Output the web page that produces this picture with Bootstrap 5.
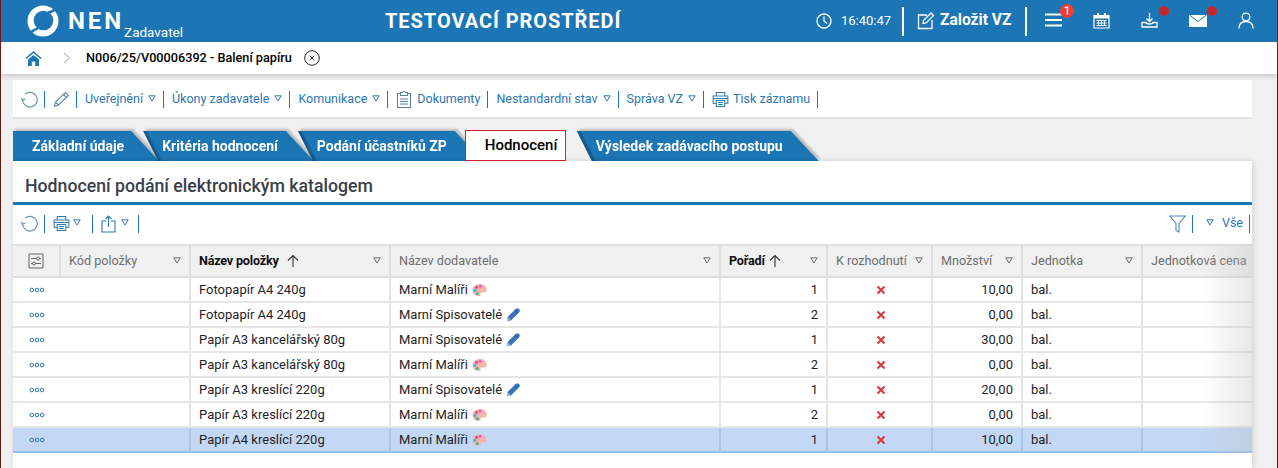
<!DOCTYPE html>
<html lang="cs">
<head>
    <meta charset="UTF-8">
    <title>NEN Zadavatel</title>
    <link href="https://cdn.jsdelivr.net/npm/bootstrap@5.3.0/dist/css/bootstrap.min.css" rel="stylesheet">
    <style>
        html, body { height: 468px; overflow: hidden; }
        body { font-family: Roboto, "Liberation Sans", sans-serif; font-size: 13px; color: #1f2328; background: #f0f0f0; }
        svg { display: block; flex: none; }
        .app-frame { height: 468px; overflow: hidden; border-left: 1px solid #6b1c12; border-right: 1px solid #6b1c12; }

        .top-bar { height: 42px; background: #1c75b5; color: #fff; }
        .logo-box { width: 384px; padding-left: 26px; }
        .logo-nen { font-size: 24px; font-weight: 700; letter-spacing: 2.9px; margin-left: 9px; line-height: 1; }
        .logo-sub { font-size: 13.5px; margin-top: 23px; line-height: 1; }
        .env-title { font-size: 20px; font-weight: 700; letter-spacing: .95px; width: 431px; }
        .time-text { font-size: 13px; margin-left: 9px; width: 61px; }
        .bar-sep { width: 2px; height: 29px; background: #fff; }
        .new-vz { font-size: 15.6px; font-weight: 700; margin-left: 5px; width: 85px; }
        .icon-strip { margin-left: 18px; margin-top: -2px; }
        .top-icon { position: relative; }
        .count-dot { position: absolute; top: -9px; left: 15px; width: 14px; height: 14px; border-radius: 50%; background: #ef3e36; font-size: 12px; line-height: 14px; text-align: center; color: #fff; }
        .alert-dot { position: absolute; top: -6px; left: 18px; width: 10px; height: 10px; border-radius: 50%; background: #c6282b; }

        .crumb-bar { height: 32px; background: #fff; box-shadow: 0 2px 5px rgba(0,0,0,.18); padding-left: 24px; position: relative; }
        .crumb-text { font-size: 12.7px; font-weight: 500; color: #000; margin: 0 12px 0 15px; }

        .action-bar { margin: 6px 25px 0 12px; height: 39px; background: #fff; border-bottom: 2px solid #e2e2e2; padding: 11px 0 0 8px; }
        .tool-item { height: 17px; padding: 0 7px 0 8px; border-right: 1px solid #1c75b5; color: #2a77b4; font-size: 12.5px; line-height: 16px; white-space: nowrap; }
        .tool-item:first-child { padding: 0 6px 0 0; }
        .action-bar .tool-item:nth-child(2) { padding-right: 6px; }
        .tri { margin-left: 5px; }

        .tab-row { margin: 11px 0 0 12px; height: 31px; }
        .tab-wrap { filter: drop-shadow(2px -2px 1px rgba(0,0,0,.22)); margin-left: -16px; margin-top: 1px; }
        .tab-wrap:first-child { margin-left: 0; }
        .tab-shape { height: 30px; padding: 0 36px 0 19px; line-height: 30px; background: linear-gradient(63deg, #14578a 0 15px, #1c75b5 18px); color: #fff; font-weight: 700; font-size: 14px; white-space: nowrap;
            clip-path: polygon(0 0, calc(100% - 28px) 0, 100% 100%, 15px 100%); }
        .tab-wrap:first-child .tab-shape { padding-right: 35px; background: #1c75b5; clip-path: polygon(0 0, calc(100% - 28px) 0, 100% 100%, 0 100%); }
        .tab-current { height: 31px; width: 101px; margin: 0 11px 0 -18px; padding-left: 19px; line-height: 28px; background: #fff; border: 1px solid #d3202a; color: #000; font-size: 15px; font-weight: 500; position: relative; z-index: 1; }

        .main-panel { margin: 0 25px 0 12px; height: 307px; background: #fff; box-shadow: 1px 0 5px rgba(0,0,0,.14); position: relative; overflow: hidden; }
        .panel-title { height: 44px; padding: 15px 0 0 12px; border-bottom: 3px solid #1c75b5; font-size: 17.7px; font-weight: 500; color: #3a3f4b; line-height: 20px; }
        .panel-tools { height: 39px; padding: 10px 0 0 8px; }
        .panel-tools .tool-item { height: 18px; padding-right: 11px; }
        .panel-tools .tool-item:first-child { padding-right: 6px; }
        .panel-tools .tool-item:nth-child(3) { padding-right: 9px; }
        .filter-side { color: #2a77b4; margin-right: 2px; }

        .grid-table { width: 1349px; table-layout: fixed; border-collapse: separate; border-spacing: 0; margin: 0; font-size: 13px; }
        .grid-table th { height: 34px; padding: 0 8px; background: #f0f0f0; font-size: 12.6px; font-weight: 400; color: #6e6e6e; vertical-align: middle; border-top: 2px solid #e0e0e0; border-bottom: 2px solid #dedede; border-right: 2px solid #dedede; white-space: nowrap; }
        .grid-table td { height: 25px; padding: 1px 8px 0; color: #1f2328; border-bottom: 2px solid #e6e6e6; border-right: 2px solid #e6e6e6; white-space: nowrap; vertical-align: middle; }
        .grid-table td:nth-child(6) { padding-left: 10px; }
        .grid-table th.is-sorted { color: #111; font-weight: 700; letter-spacing: -.2px; }
        .grid-table td.no-line { border-right: 0; }
        .grid-table tr.row-picked td { background: #c2d8f4; border-bottom-color: #93c0f0; border-right-color: #a9c6e6; }
        .th-inner { display: flex; align-items: center; justify-content: space-between; }
        .dots-cell { padding-left: 16px !important; }
        .supplier-mark { display: inline-block; vertical-align: -3px; margin-left: 4px; }
        .right-fade { position: absolute; top: 83px; right: 0; width: 50px; height: 209px; background: linear-gradient(to right, rgba(190,190,190,0), rgba(190,190,190,.35)); pointer-events: none; }
    </style>
</head>
<body>
<svg width="0" height="0" class="position-absolute">
    <symbol id="ic-tri" viewBox="0 0 8 7"><path d="M.8.8h6.400L4 6z" fill="none" stroke="currentColor" stroke-width="1"/></symbol>
    <symbol id="ic-refresh" viewBox="0 0 18 18"><path d="M4.200 3.400A7.800 7.800 0 1 1 1.600 9.600" fill="none" stroke="#5b87ad" stroke-width="1.100"/><path d="M.4 7.200l1.200 2.600 3-1.400" fill="none" stroke="#5b87ad" stroke-width="1.100"/></symbol>
    <symbol id="ic-print" viewBox="0 0 18 18"><path d="M4.500 5V1.500h9V5M4.500 13H1.200V5.200h15.600V13h-3.300" fill="none" stroke="currentColor" stroke-width="1.100"/><path d="M4.500 10h9v6.500h-9zM6.500 12.200h5M6.500 14.200h5M1.200 8h15.600" fill="none" stroke="currentColor" stroke-width="1.100"/></symbol>
    <symbol id="ic-dots" viewBox="0 0 16 6"><g fill="none" stroke="#2a77b4" stroke-width="1"><circle cx="2.800" cy="3" r="1.800"/><circle cx="8" cy="3" r="1.800"/><circle cx="13.200" cy="3" r="1.800"/></g></symbol>
    <symbol id="ic-x" viewBox="0 0 10 10"><path d="M1.500 1.500l7 7M8.500 1.500l-7 7" stroke="#d8383c" stroke-width="2" fill="none"/></symbol>
    <symbol id="ic-up" viewBox="0 0 12 14"><path d="M6 13V1.500M1 6.500 6 1.500l5 5" fill="none" stroke="#333" stroke-width="1.100"/></symbol>
    <symbol id="ic-palette" viewBox="0 0 15 14"><path d="M8 1C4 1 .5 3.400.5 7.200c0 3.600 3 5.800 6.700 5.800 1.500 0 1.800-1 1.300-1.900-.5-1 .2-1.700 1.300-1.700h2.400c1.500 0 2.500-.8 2.500-2.200C14.700 3.500 12 1 8 1z" fill="#f5b3aa"/><circle cx="4.500" cy="4.200" r="1.500" fill="#ee3f9d"/><circle cx="8.200" cy="3.300" r="1.300" fill="#d94fe0"/><circle cx="2.900" cy="7.500" r="1.400" fill="#2fb2e6"/><circle cx="5.200" cy="10.500" r="1.500" fill="#3dbb86"/></symbol>
    <symbol id="ic-pen" viewBox="0 0 14 14"><path d="M.8 13.200l.8-4.200L9.600 1a2 2 0 0 1 3.400 3.400L5 12.400z" fill="#3b76bd"/><path d="M.8 13.200l.8-4.200 3.400 3.400z" fill="#a9b7c9"/><path d="M8.800 2l3.200 3.200" stroke="#20518e" stroke-width=".8"/></symbol>
</svg>

<div class="app-frame">
    <header class="top-bar d-flex align-items-center">
        <div class="logo-box d-flex align-items-center">
            <svg width="32" height="32" viewBox="0 0 32 32"><circle cx="16" cy="16" r="15.500" fill="#fff"/><circle cx="16.500" cy="15.500" r="9.800" fill="#1c75b5"/><path d="M21 7.500C25 7 29 4.500 31.500 1M11 23.500C7.500 24.500 3.500 27 1 31" fill="none" stroke="#1c75b5" stroke-width="2.600"/></svg>
            <span class="logo-nen">NEN</span>
            <span class="logo-sub">Zadavatel</span>
        </div>
        <div class="env-title">TESTOVACÍ PROSTŘEDÍ</div>
        <svg width="16" height="16" viewBox="0 0 16 16"><circle cx="8" cy="8" r="7" fill="none" stroke="#fff" stroke-width="1.300"/><path d="M8 3.500V8l3 2.500" fill="none" stroke="#fff" stroke-width="1.300"/></svg>
        <span class="time-text">16:40:47</span>
        <span class="bar-sep"></span>
        <svg width="18" height="18" viewBox="0 0 18 18" style="margin-left:13px"><path d="M10 3H1.500v13.500H15V8" fill="none" stroke="#fff" stroke-width="1.300"/><path d="M6.500 8.500 14 1l2.500 2.500L9 11l-3 .5z" fill="none" stroke="#fff" stroke-width="1.300"/></svg>
        <span class="new-vz">Založit VZ</span>
        <span class="bar-sep"></span>
        <div class="icon-strip d-flex align-items-center">
            <div class="top-icon"><svg width="17" height="14" viewBox="0 0 17 14"><path d="M0 1.500h17M0 7h17M0 12.500h17" stroke="#fff" stroke-width="2"/></svg><span class="count-dot">1</span></div>
            <div class="top-icon" style="margin-left:31px"><svg width="17" height="17" viewBox="0 0 17 17"><path d="M1 3.500h15V16H1z" fill="none" stroke="#fff" stroke-width="1.200"/><path d="M1 3h15v3.500H1zM4 1h2v3H4zM11 1h2v3h-2z" fill="#fff"/><path d="M3.500 8.500h10M3.500 11h10M3.500 13.500h10M5.500 8v6M8.500 8v6M11.500 8v6" stroke="#fff" stroke-width="1"/></svg></div>
            <div class="top-icon" style="margin-left:31px"><svg width="17" height="17" viewBox="0 0 17 17"><path d="M8.500 1v8M5.500 6.500l3 3 3-3" fill="none" stroke="#fff" stroke-width="1.300"/><path d="M1 10.500v4.500h15v-4.500h-4c-.5 2-6.500 2-7 0z" fill="none" stroke="#fff" stroke-width="1.300"/></svg><span class="alert-dot"></span></div>
            <div class="top-icon" style="margin-left:31px"><svg width="18" height="13" viewBox="0 0 18 13"><path d="M0 1h18v12H0z" fill="#fff"/><path d="M.5 1 9 7.500 17.500 1" fill="none" stroke="#1c75b5" stroke-width="1"/></svg><span class="alert-dot" style="top:-8px"></span></div>
            <div class="top-icon" style="margin-left:31px"><svg width="16" height="17" viewBox="0 0 16 17"><circle cx="8" cy="5" r="3.800" fill="none" stroke="#fff" stroke-width="1.300"/><path d="M1 16.500c0-4.500 2.500-7 7-7s7 2.500 7 7" fill="none" stroke="#fff" stroke-width="1.300"/></svg></div>
        </div>
    </header>

    <nav class="crumb-bar d-flex align-items-center">
        <svg width="17" height="16" viewBox="0 0 17 16"><path d="M8.500 1 .5 8l1 1 7-6 7 6 1-1z" fill="#1c75b5"/><path d="M3 9.500 8.500 5 14 9.500V16h-3.800v-4.500H6.800V16H3z" fill="#1c75b5"/></svg>
        <svg width="8" height="12" viewBox="0 0 8 12" style="margin-left:21px"><path d="M1 1l5.500 5L1 11" fill="none" stroke="#9a9a9a" stroke-width="1"/></svg>
        <span class="crumb-text">N006/25/V00006392 - Balení papíru</span>
        <svg width="16" height="16" viewBox="0 0 16 16"><circle cx="8" cy="8" r="7.300" fill="none" stroke="#222" stroke-width="1"/><path d="M5.800 5.800l4.400 4.400M10.200 5.800l-4.400 4.400" stroke="#222" stroke-width="1"/></svg>
    </nav>

    <div class="action-bar d-flex">
        <div class="tool-item"><svg width="17" height="17"><use href="#ic-refresh"/></svg></div>
        <div class="tool-item"><svg width="17" height="17" viewBox="0 0 17 17"><path d="M1.500 15.500 2.500 11 12.500 1.500l3 3L5.500 14zM2.500 11l3 3M10.500 3.500l3 3" fill="none" stroke="#5b87ad" stroke-width="1.100"/></svg></div>
        <div class="tool-item d-flex">Uveřejnění<svg class="tri mt-1" width="8" height="7"><use href="#ic-tri"/></svg></div>
        <div class="tool-item d-flex">Úkony zadavatele<svg class="tri mt-1" width="8" height="7"><use href="#ic-tri"/></svg></div>
        <div class="tool-item d-flex">Komunikace<svg class="tri mt-1" width="8" height="7"><use href="#ic-tri"/></svg></div>
        <div class="tool-item d-flex"><svg width="16" height="17" viewBox="0 0 16 17" style="margin-right:5px"><path d="M4.500 2.500H1.500v14h13v-14h-3" fill="none" stroke="#5b7f9f" stroke-width="1.100"/><path d="M4.500 1.500h2c.3-1.300 2.700-1.300 3 0h2v3h-7zM4 8h8M4 10.500h8M4 13h8" fill="none" stroke="#5b7f9f" stroke-width="1.100"/></svg>Dokumenty</div>
        <div class="tool-item d-flex">Nestandardní stav<svg class="tri mt-1" width="8" height="7"><use href="#ic-tri"/></svg></div>
        <div class="tool-item d-flex">Správa VZ<svg class="tri mt-1" width="8" height="7"><use href="#ic-tri"/></svg></div>
        <div class="tool-item d-flex"><svg width="17" height="17" style="margin-right:4px"><use href="#ic-print"/></svg>Tisk záznamu</div>
    </div>

    <div class="tab-row d-flex">
        <div class="tab-wrap"><div class="tab-shape">Základní údaje</div></div>
        <div class="tab-wrap"><div class="tab-shape">Kritéria hodnocení</div></div>
        <div class="tab-wrap"><div class="tab-shape">Podání účastníků ZP</div></div>
        <div class="tab-current">Hodnocení</div>
        <div class="tab-wrap" style="margin-left:0"><div class="tab-shape">Výsledek zadávacího postupu</div></div>
    </div>

    <section class="main-panel">
        <h1 class="panel-title m-0">Hodnocení podání elektronickým katalogem</h1>
        <div class="panel-tools d-flex">
            <div class="tool-item"><svg width="17" height="17"><use href="#ic-refresh"/></svg></div>
            <div class="tool-item d-flex"><svg width="17" height="17"><use href="#ic-print"/></svg><svg class="mt-1" style="margin-left:3px" width="8" height="7"><use href="#ic-tri"/></svg></div>
            <div class="tool-item d-flex"><svg width="15" height="18" viewBox="0 0 15 18"><path d="M5 6H1v11h13V6h-4M7.500 12V1M4.500 4l3-3 3 3" fill="none" stroke="#2a77b4" stroke-width="1.100"/></svg><svg class="tri mt-1" width="8" height="7"><use href="#ic-tri"/></svg></div>
            <div class="filter-side ms-auto d-flex">
                <svg width="17" height="18" viewBox="0 0 17 18" style="margin-right:6px"><path d="M.8 1h15.400L10 8.500V17l-3-1.500v-7z" fill="none" stroke="#4a8ac4" stroke-width="1.100"/></svg>
                <span class="tool-item" style="padding:0;width:0"></span>
                <svg class="mt-1" style="margin-left:13px" width="8" height="7"><use href="#ic-tri"/></svg>
                <span class="tool-item" style="padding:0 6px 0 8px">Vše</span>
            </div>
        </div>
        <table class="table grid-table">
            <colgroup><col style="width:48px"><col style="width:130px"><col style="width:200px"><col style="width:330px"><col style="width:107px"><col style="width:105px"><col style="width:90px"><col style="width:120px"><col style="width:219px"></colgroup>
            <thead>
                <tr>
                    <th><svg class="mx-auto" width="16" height="16" viewBox="0 0 16 16"><path d="M1 1h14v14H1z" fill="none" stroke="#666" stroke-width="1"/><path d="M3 5.500h10M3 10.500h10" stroke="#666" stroke-width="1"/><circle cx="10" cy="5.500" r="1.500" fill="#f0f0f0" stroke="#666"/><circle cx="6" cy="10.500" r="1.500" fill="#f0f0f0" stroke="#666"/></svg></th>
                    <th><div class="th-inner">Kód položky<svg width="8" height="7"><use href="#ic-tri"/></svg></div></th>
                    <th class="is-sorted"><div class="th-inner"><span class="d-flex align-items-center gap-2">Název položky<svg width="12" height="14"><use href="#ic-up"/></svg></span><svg style="color:#6e6e6e" width="8" height="7"><use href="#ic-tri"/></svg></div></th>
                    <th><div class="th-inner">Název dodavatele<svg width="8" height="7"><use href="#ic-tri"/></svg></div></th>
                    <th class="is-sorted"><div class="th-inner"><span class="d-flex align-items-center gap-1">Pořadí<svg width="12" height="14"><use href="#ic-up"/></svg></span><svg style="color:#6e6e6e" width="8" height="7"><use href="#ic-tri"/></svg></div></th>
                    <th><div class="th-inner">K rozhodnutí<svg width="8" height="7"><use href="#ic-tri"/></svg></div></th>
                    <th><div class="th-inner">Množství<svg width="8" height="7"><use href="#ic-tri"/></svg></div></th>
                    <th><div class="th-inner">Jednotka<svg width="8" height="7"><use href="#ic-tri"/></svg></div></th>
                    <th>Jednotková cena</th>
                </tr>
            </thead>
            <tbody>
                <tr><td class="dots-cell no-line"><svg width="16" height="6"><use href="#ic-dots"/></svg></td><td></td><td>Fotopapír A4 240g</td><td>Marní Malíři<svg class="supplier-mark" width="15" height="14"><use href="#ic-palette"/></svg></td><td class="text-end">1</td><td><svg class="mx-auto" width="10" height="10"><use href="#ic-x"/></svg></td><td class="text-end">10,00</td><td>bal.</td><td></td></tr>
                <tr><td class="dots-cell no-line"><svg width="16" height="6"><use href="#ic-dots"/></svg></td><td></td><td>Fotopapír A4 240g</td><td>Marní Spisovatelé<svg class="supplier-mark" width="14" height="14"><use href="#ic-pen"/></svg></td><td class="text-end">2</td><td><svg class="mx-auto" width="10" height="10"><use href="#ic-x"/></svg></td><td class="text-end">0,00</td><td>bal.</td><td></td></tr>
                <tr><td class="dots-cell no-line"><svg width="16" height="6"><use href="#ic-dots"/></svg></td><td></td><td>Papír A3 kancelářský 80g</td><td>Marní Spisovatelé<svg class="supplier-mark" width="14" height="14"><use href="#ic-pen"/></svg></td><td class="text-end">1</td><td><svg class="mx-auto" width="10" height="10"><use href="#ic-x"/></svg></td><td class="text-end">30,00</td><td>bal.</td><td></td></tr>
                <tr><td class="dots-cell no-line"><svg width="16" height="6"><use href="#ic-dots"/></svg></td><td></td><td>Papír A3 kancelářský 80g</td><td>Marní Malíři<svg class="supplier-mark" width="15" height="14"><use href="#ic-palette"/></svg></td><td class="text-end">2</td><td><svg class="mx-auto" width="10" height="10"><use href="#ic-x"/></svg></td><td class="text-end">0,00</td><td>bal.</td><td></td></tr>
                <tr><td class="dots-cell no-line"><svg width="16" height="6"><use href="#ic-dots"/></svg></td><td></td><td>Papír A3 kreslící 220g</td><td>Marní Spisovatelé<svg class="supplier-mark" width="14" height="14"><use href="#ic-pen"/></svg></td><td class="text-end">1</td><td><svg class="mx-auto" width="10" height="10"><use href="#ic-x"/></svg></td><td class="text-end">20,00</td><td>bal.</td><td></td></tr>
                <tr><td class="dots-cell no-line"><svg width="16" height="6"><use href="#ic-dots"/></svg></td><td></td><td>Papír A3 kreslící 220g</td><td>Marní Malíři<svg class="supplier-mark" width="15" height="14"><use href="#ic-palette"/></svg></td><td class="text-end">2</td><td><svg class="mx-auto" width="10" height="10"><use href="#ic-x"/></svg></td><td class="text-end">0,00</td><td>bal.</td><td></td></tr>
                <tr class="row-picked"><td class="dots-cell no-line"><svg width="16" height="6"><use href="#ic-dots"/></svg></td><td></td><td>Papír A4 kreslící 220g</td><td>Marní Malíři<svg class="supplier-mark" width="15" height="14"><use href="#ic-palette"/></svg></td><td class="text-end">1</td><td><svg class="mx-auto" width="10" height="10"><use href="#ic-x"/></svg></td><td class="text-end">10,00</td><td>bal.</td><td></td></tr>
            </tbody>
        </table>
        <div class="right-fade"></div>
    </section>
</div>
<script src="https://cdn.jsdelivr.net/npm/bootstrap@5.3.0/dist/js/bootstrap.bundle.min.js"></script>
</body>
</html>
